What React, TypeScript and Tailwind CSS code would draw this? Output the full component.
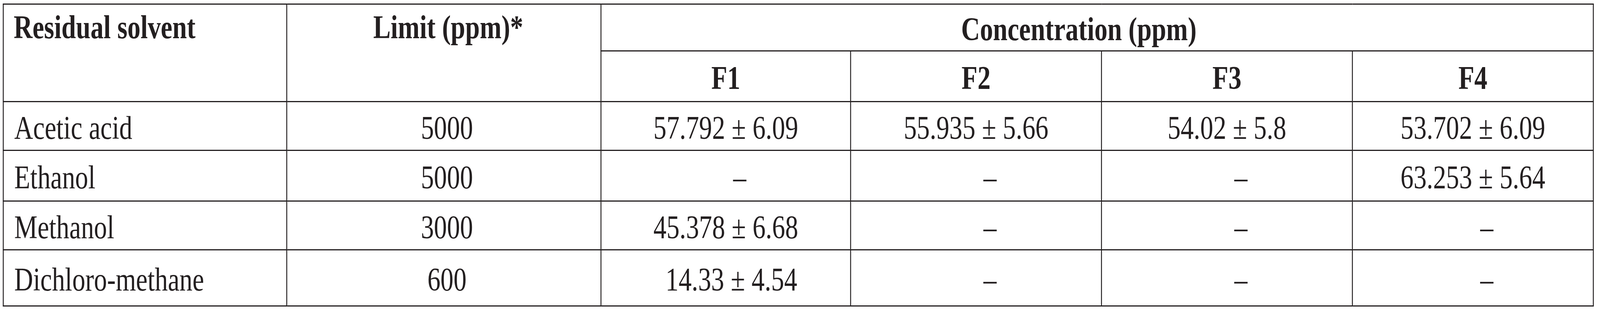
type Row = {
  name: string
  limit: string
  values: string[]
  height: string
}

const rows: Row[] = [
  {
    name: "Acetic acid",
    limit: "5000",
    values: ["57.792 ± 6.09", "55.935 ± 5.66", "54.02 ± 5.8", "53.702 ± 6.09"],
    height: "h-[125px]",
  },
  { name: "Ethanol", limit: "5000", values: ["–", "–", "–", "63.253 ± 5.64"], height: "h-[130px]" },
  { name: "Methanol", limit: "3000", values: ["45.378 ± 6.68", "–", "–", "–"], height: "h-[125px]" },
  { name: "Dichloro-methane", limit: "600", values: ["14.33 ± 4.54", "–", "–", "–"], height: "h-[144px]" },
]

// design width of the table page; squeezed sideways when the window is narrower
const DESIGN_WIDTH = 5153

const cell = "border-[3px] border-[#231f20] pt-[10px] pb-0"

function Value({ text }: { text: string }) {
  if (text === "–") return <span className="pl-[90px]">–</span>
  // this one sits a little right of centre in the source table
  if (text.startsWith("14.33")) return <span className="pl-[36px]">{text}</span>
  return <span>{text}</span>
}

export default function App() {
  const scale = typeof window === "undefined" ? 1 : Math.min(1, window.innerWidth / DESIGN_WIDTH)

  return (
    <div className="h-screen w-screen overflow-hidden bg-white">
      <div
        className="w-[5153px] origin-top-left pl-[9px] pt-[9px] font-['Liberation_Serif','Times_New_Roman',serif] text-[84px] leading-[1.15] text-[#231f20]"
        style={{ transform: `scaleX(${scale})` }}
      >
        <table className="w-[5121px] table-fixed border-collapse">
          <colgroup>
            <col className="w-[913px]" />
            <col className="w-[1012px]" />
            <col className="w-[804px]" />
            <col className="w-[808px]" />
            <col className="w-[808px]" />
            <col className="w-[776px]" />
          </colgroup>
          <thead>
            <tr>
              <th rowSpan={2} className={`${cell} pl-[32px] text-left align-top font-bold`}>
                Residual solvent
              </th>
              <th rowSpan={2} className={`${cell} pl-[28px] text-center align-top font-bold`}>
                Limit (ppm)*
              </th>
              <th colSpan={4} className={`${cell} h-[120px] pr-[118px] text-center align-middle font-bold`}>
                Concentration (ppm)
              </th>
            </tr>
            <tr>
              {["F1", "F2", "F3", "F4"].map((f) => (
                <th key={f} className={`${cell} h-[130px] text-center align-middle font-bold`}>
                  {f}
                </th>
              ))}
            </tr>
          </thead>
          <tbody>
            {rows.map((r) => (
              <tr key={r.name}>
                <td className={`${cell} ${r.height} pl-[34px] text-left align-middle`}>{r.name}</td>
                <td className={`${cell} pl-[20px] text-center align-middle`}>{r.limit}</td>
                {r.values.map((v, i) => (
                  <td key={i} className={`${cell} text-center align-middle`}>
                    <Value text={v} />
                  </td>
                ))}
              </tr>
            ))}
          </tbody>
        </table>
      </div>
    </div>
  )
}
